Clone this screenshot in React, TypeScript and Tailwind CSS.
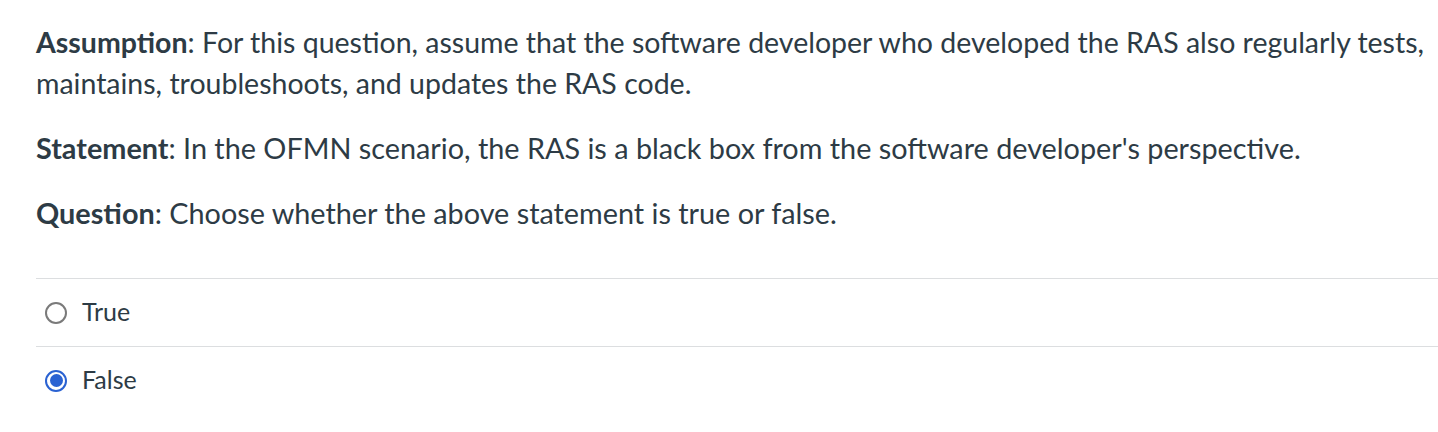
import React from "react";

// ─── Answer option ───────────────────────────────────────────────

interface AnswerRowProps {
  label: string;
  selected?: boolean;
}

function AnswerRow({ label, selected = false }: AnswerRowProps) {
  return (
    <label className="box-border flex h-[68px] items-center border-t border-[#dcdee0]">
      <span className="ml-[9px] flex h-[22px] w-[22px] shrink-0 items-center justify-center">
        {selected ? (
          <span className="box-border flex h-[22px] w-[22px] shrink-0 items-center justify-center rounded-full border-2 border-[#2a62d2] bg-white">
            <span className="h-[13px] w-[13px] rounded-full bg-[#2a62d2]" />
          </span>
        ) : (
          <span className="box-border h-[22px] w-[22px] shrink-0 rounded-full border-2 border-[#7a7a7a] bg-white" />
        )}
      </span>
      <span className="ml-[15px] pb-[4px] text-[25px] leading-[36px] text-[#2d3b45]">{label}</span>
    </label>
  );
}

// ─── Question ────────────────────────────────────────────────────

export default function App() {
  return (
    <div
      className="min-h-screen bg-white pl-[36px] pt-[22px] text-[#2d3b45]"
      style={{ fontFamily: "Lato, 'Open Sans', sans-serif" }}
    >
      <div className="flex flex-col gap-[24px] text-[28.5px] leading-[41px]">
        <p className="whitespace-nowrap">
          <strong className="font-bold">Assumption</strong>: For this question, assume that the
          software developer who developed the RAS also regularly tests,
          <br />
          maintains, troubleshoots, and updates the RAS code.
        </p>
        <p className="text-[28.8px]">
          <strong className="font-bold">Statement</strong>: In the OFMN scenario, the RAS is a
          black box from the software developer's perspective.
        </p>
        <p className="text-[28.8px]">
          <strong className="font-bold">Question</strong>: Choose whether the above statement is
          true or false.
        </p>
      </div>

      <div className="mt-[44px]">
        <AnswerRow label="True" />
        <AnswerRow label="False" selected />
      </div>
    </div>
  );
}
